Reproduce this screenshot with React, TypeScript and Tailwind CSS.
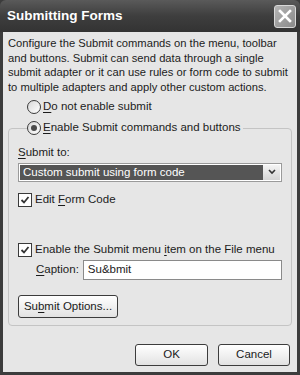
import React from "react";

function U({ children }: { children: React.ReactNode }) {
  return <span className="underline underline-offset-2">{children}</span>;
}

function Radio({ checked }: { checked?: boolean }) {
  return (
    <span className="w-[14px] h-[14px] rounded-full border border-[#3a3a3a] bg-gradient-to-br from-[#d8d8d8] to-white flex items-center justify-center shrink-0">
      {checked && <span className="w-[6px] h-[6px] rounded-full bg-[#4a4a4a]" />}
    </span>
  );
}

function Check() {
  return (
    <span className="w-[14px] h-[14px] border border-[#3a3a3a] bg-white flex items-center justify-center shrink-0">
      <svg width="10" height="10" viewBox="0 0 10 10">
        <path d="M1.5 5 L4 7.5 L8.5 2" fill="none" stroke="#333" strokeWidth="1.8" />
      </svg>
    </span>
  );
}

function Button({ children, className }: { children: React.ReactNode; className?: string }) {
  return (
    <div
      className={`rounded-[3px] border border-[#3c3c3c] bg-gradient-to-b from-white to-[#e2e2e2] flex items-center justify-center text-[#1a1a1a] ${className ?? ""}`}
    >
      {children}
    </div>
  );
}

export default function App(): React.ReactElement {
  return (
    <div className="w-[300px] h-[375px] bg-[#3c3c3c] flex flex-col text-[11.5px] text-[#1c1c1c] font-['Liberation_Sans',Arial,sans-serif]">
      <div className="h-[32px] shrink-0 bg-gradient-to-b from-[#5a5a5a] via-[#3e3e3e] to-[#333] flex items-center justify-between pl-[7px] pr-[4px] rounded-t-[6px]">
        <span className="text-white font-bold text-[13.5px]">Submitting Forms</span>
        <div className="w-[22px] h-[23px] rounded-[3px] border border-[#d8d8d8] bg-gradient-to-br from-[#b4b4b4] to-[#8a8a8a] flex items-center justify-center">
          <svg width="14" height="14" viewBox="0 0 14 14">
            <path d="M2 2 L12 12 M12 2 L2 12" stroke="white" strokeWidth="2.6" strokeLinecap="square" />
          </svg>
        </div>
      </div>
      <div className="flex-1 mx-[3px] mb-[3px] bg-[#e6e6e6] flex flex-col px-[5px] pt-[4px]">
        <p className="leading-[14.7px] whitespace-nowrap text-[11.2px]">
          Configure the Submit commands on the menu, toolbar
          <br />
          and buttons. Submit can send data through a single
          <br />
          submit adapter or it can use rules or form code to submit
          <br />
          to multiple adapters and apply other custom actions.
        </p>
        <div className="mt-[3px] ml-[19px] flex items-center gap-[2px] h-[18px]">
          <Radio />
          <span>
            <U>D</U>o not enable submit
          </span>
        </div>
        <div className="relative h-[198px] border border-[#c4c4c4] rounded-[4px] mt-[12px] flex flex-col px-[9px]">
          <div className="absolute -top-[10px] left-[18px] flex items-center gap-[2px] bg-[#e6e6e6] pr-[2px] h-[18px]">
            <Radio checked />
            <span>
              <U>E</U>nable Submit commands and buttons
            </span>
          </div>
          <div className="mt-[16px] leading-[15px]">
            <U>S</U>ubmit to:
          </div>
          <div className="mt-[3px] h-[19px] border border-[#9a9a9a] bg-white p-[1px] flex">
            <div className="flex-1 bg-[#555] text-white flex items-center pl-[3px]">Custom submit using form code</div>
            <div className="w-[17px] bg-gradient-to-b from-[#f4f4f4] to-[#d4d4d4] flex items-center justify-center">
              <svg width="8" height="6" viewBox="0 0 8 6">
                <path d="M1 1 L4 4 L7 1" fill="none" stroke="#333" strokeWidth="1.6" />
              </svg>
            </div>
          </div>
          <div className="mt-[10px] flex items-center gap-[3px] h-[16px]">
            <Check />
            <span>
              Edit <U>F</U>orm Code
            </span>
          </div>
          <div className="mt-[34px] flex items-center gap-[3px] h-[16px]">
            <Check />
            <span>
              Enable the Submit menu <U>i</U>tem on the File menu
            </span>
          </div>
          <div className="mt-[2px] flex items-center pl-[18px] gap-[4px]">
            <span>
              <U>C</U>aption:
            </span>
            <div className="flex-1 h-[20px] border border-[#8a8a8a] bg-white flex items-center pl-[4px]">Su&amp;bmit</div>
          </div>
          <Button className="mt-[15px] w-[100px] h-[23px]">
            <span>
              Su<U>b</U>mit Options...
            </span>
          </Button>
        </div>
        <div className="mt-[18px] flex justify-end gap-[10px] pr-[2px]">
          <Button className="w-[73px] h-[22px]">OK</Button>
          <Button className="w-[72px] h-[22px]">Cancel</Button>
        </div>
      </div>
    </div>
  );
}
